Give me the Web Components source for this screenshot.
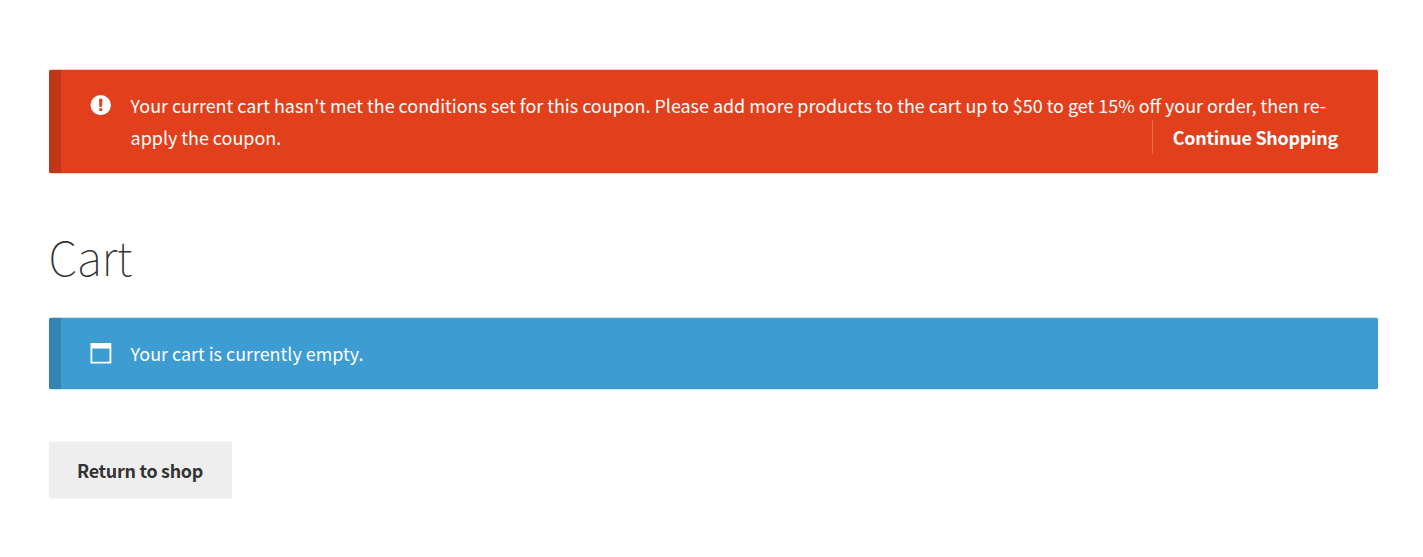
<!DOCTYPE html>
<html lang="en">
<head>
<meta charset="utf-8">
<title>Cart</title>
<style>
body { margin: 0; background: #fff; font-family: "Noto Sans CJK JP", "Open Sans", sans-serif; }
</style>
</head>
<body>
<cart-page></cart-page>
<script>
class StoreNotice extends HTMLElement {
  constructor() {
    super();
    const icon = this.getAttribute('type') === 'error'
      ? '<path fill="#fff" fill-rule="evenodd" d="M10.2.4a10.2 10.2 0 1 0 0 20.4a10.2 10.2 0 0 0 0-20.4zM8.5 4.3h3.4l-.4 8.1H8.9zM8.7 13.7h3v2.9h-3z"/>'
      : '<path fill="#fff" fill-rule="evenodd" d="M0 .5h20.8v20.4H0zM1.8 6H19v13.2H1.8z"/>';
    this.attachShadow({ mode: 'open' }).innerHTML = `
      <style>
        :host { display: flex; box-sizing: border-box; border-left: 12px solid rgba(0,0,0,.15);
          border-radius: 2px; padding: 19px 40px 20px 29px; color: #fff;
          font-size: 17.92px; line-height: 32.36px; }
        :host([type=error]) { background-color: #e2401c; }
        :host([type=info]) { background-color: #3d9cd2; }
        svg { flex: none; width: 22px; height: 22px; margin: 6px 18.6px 0 0; }
        .body { flex: 1; white-space: nowrap; }
        ::slotted(notice-link) { float: right; }
      </style>
      <svg viewBox="-.5 0 22 22">${icon}</svg>
      <div class="body"><slot></slot></div>`;
  }
}
class NoticeLink extends HTMLElement {
  constructor() {
    super();
    this.attachShadow({ mode: 'open' }).innerHTML = `
      <style>
        :host { display: block; border-left: 1px solid rgba(255,255,255,.25); padding-left: 20px; }
        a { color: #fff; font-weight: 700; text-decoration: none; letter-spacing: -.24px; }
      </style>
      <a href="#"><slot></slot></a>`;
  }
}
class ShopButton extends HTMLElement {
  constructor() {
    super();
    this.attachShadow({ mode: 'open' }).innerHTML = `
      <style>
        :host { display: inline-block; }
        a { display: flex; align-items: center; box-sizing: border-box; padding: 0 0 2px 28px; width: 182.5px; height: 57px;
          background: #eee; color: #333; font-weight: 600; font-size: 17.9px; letter-spacing: -.28px; text-decoration: none; white-space: nowrap; }
      </style>
      <a href="#"><slot></slot></a>`;
  }
}
class CartPage extends HTMLElement {
  constructor() {
    super();
    this.attachShadow({ mode: 'open' }).innerHTML = `
      <style>
        :host { display: flex; flex-direction: column; align-items: flex-start; box-sizing: border-box;
          width: 1423px; height: 557px; padding: 70px 45px 0 49px; transform: translateY(-.5px); }
        store-notice { width: 1329px; }
        store-notice[type=error] { height: 104px; }
        store-notice[type=info] { height: 72px; }
        h1 { margin: 50px 0 30px -.5px; height: 64px; line-height: 64px; font-size: 46.5px; font-weight: 100; color: #333; letter-spacing: -.4px; }
        shop-button { margin-top: 52px; }
      </style>
      <store-notice type="error">Your current cart hasn't met the conditions set for this coupon. Please add more products to the cart up to $50 to get 15% off your order, then re-<br>apply the coupon. <notice-link>Continue Shopping</notice-link></store-notice>
      <h1>Cart</h1>
      <store-notice type="info">Your cart is currently empty.</store-notice>
      <shop-button>Return to shop</shop-button>`;
  }
}
customElements.define('store-notice', StoreNotice);
customElements.define('notice-link', NoticeLink);
customElements.define('shop-button', ShopButton);
customElements.define('cart-page', CartPage);
</script>
</body>
</html>
